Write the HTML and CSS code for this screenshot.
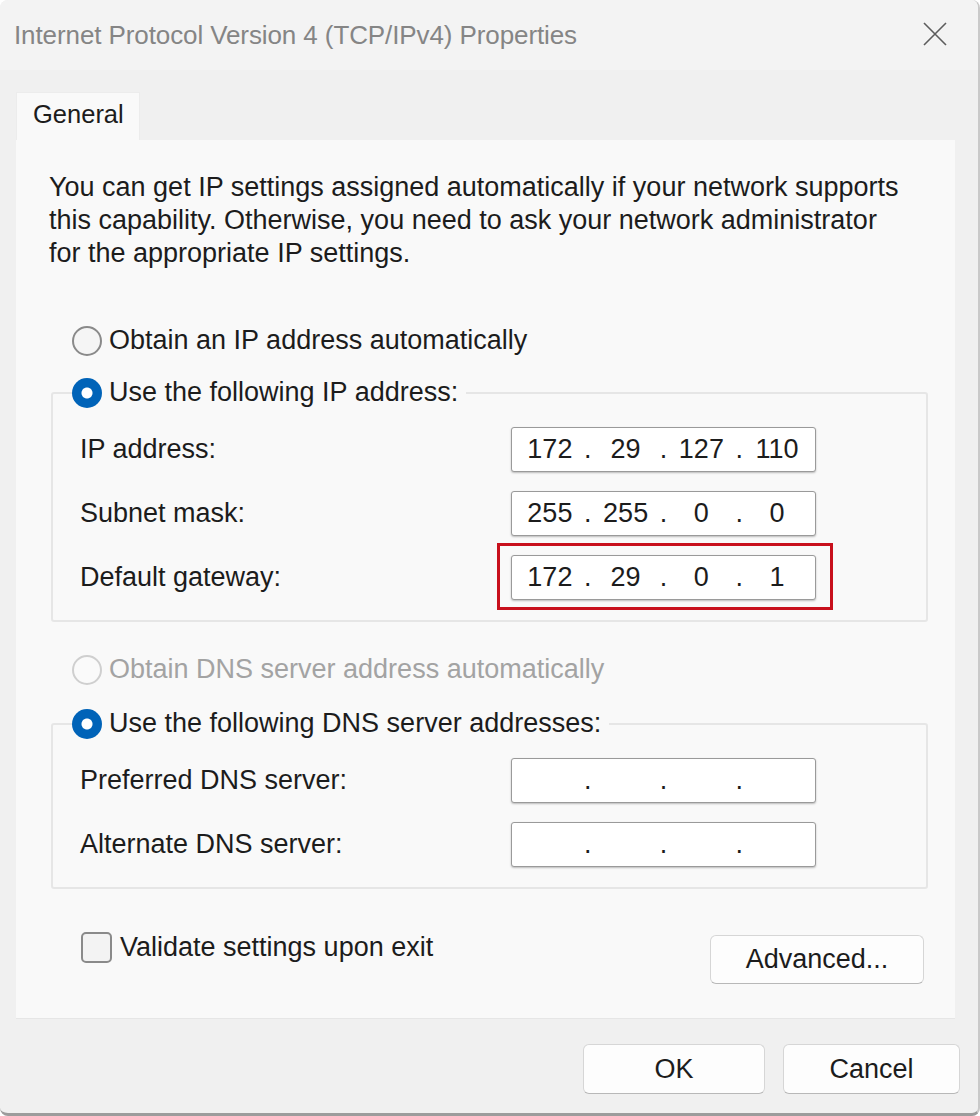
FILE: index.html
```html
<!DOCTYPE html>
<html lang="en">
<head>
    <meta charset="UTF-8">
    <meta name="viewport" content="width=device-width, initial-scale=1.0">
    <title>Internet Protocol Version 4 (TCP/IPv4) Properties</title>
    <link rel="stylesheet" href="styles.css">
</head>
<body>
    <div class="window">
        <div class="titlebar">
            <span class="title">Internet Protocol Version 4 (TCP/IPv4) Properties</span>
            <svg class="close" width="26" height="26" viewBox="0 0 26 26">
                <path d="M2 2 L24 24 M24 2 L2 24" stroke="#5c5c5c" stroke-width="1.6" fill="none"/>
            </svg>
        </div>
        <div class="tabs">
            <div class="tab">General</div>
        </div>
        <div class="page">
            <p class="intro">You can get IP settings assigned automatically if your network supports<br>this capability. Otherwise, you need to ask your network administrator<br>for the appropriate IP settings.</p>

            <div class="option">
                <span class="radio"></span>
                <span>Obtain an IP address automatically</span>
            </div>

            <fieldset class="group">
                <legend class="option">
                    <span class="radio checked"></span>
                    <span>Use the following IP address:</span>
                </legend>
                <div class="fields">
                    <label>IP address:</label>
                    <div class="ip">
                        <span class="seg">172</span><span class="dot">.</span><span class="seg">29</span><span class="dot">.</span><span class="seg">127</span><span class="dot">.</span><span class="seg">110</span>
                    </div>
                    <label>Subnet mask:</label>
                    <div class="ip">
                        <span class="seg">255</span><span class="dot">.</span><span class="seg">255</span><span class="dot">.</span><span class="seg">0</span><span class="dot">.</span><span class="seg">0</span>
                    </div>
                    <label>Default gateway:</label>
                    <div class="marked">
                        <div class="ip">
                            <span class="seg">172</span><span class="dot">.</span><span class="seg">29</span><span class="dot">.</span><span class="seg">0</span><span class="dot">.</span><span class="seg">1</span>
                        </div>
                    </div>
                </div>
            </fieldset>

            <div class="option disabled dns-auto">
                <span class="radio"></span>
                <span>Obtain DNS server address automatically</span>
            </div>

            <fieldset class="group dns">
                <legend class="option">
                    <span class="radio checked"></span>
                    <span>Use the following DNS server addresses:</span>
                </legend>
                <div class="fields">
                    <label>Preferred DNS server:</label>
                    <div class="ip">
                        <span class="seg"></span><span class="dot">.</span><span class="seg"></span><span class="dot">.</span><span class="seg"></span><span class="dot">.</span><span class="seg"></span>
                    </div>
                    <label>Alternate DNS server:</label>
                    <div class="ip">
                        <span class="seg"></span><span class="dot">.</span><span class="seg"></span><span class="dot">.</span><span class="seg"></span><span class="dot">.</span><span class="seg"></span>
                    </div>
                </div>
            </fieldset>

            <div class="bottom">
                <div class="check-row">
                    <span class="checkbox"></span>
                    <span>Validate settings upon exit</span>
                </div>
                <button class="btn advanced">Advanced...</button>
            </div>
        </div>
        <div class="footer">
            <button class="btn ok">OK</button>
            <button class="btn cancel">Cancel</button>
        </div>
    </div>
</body>
</html>
```

FILE: styles.css
```css
html, body {
    margin: 0;
    padding: 0;
    background: #ffffff;
}
body {
    font-family: "Liberation Sans", Arial, sans-serif;
    font-size: 27px;
    color: #1c1c1c;
}
.window {
    width: 980px;
    height: 1116px;
    box-sizing: border-box;
    background: #f0f0f0;
    border-right: 2px solid #c9c9c9;
    border-bottom: 3px solid #9c9c9c;
    border-radius: 8px;
    overflow: hidden;
}
.titlebar {
    height: 70px;
    display: flex;
    align-items: center;
    justify-content: space-between;
    padding: 0 30px 0 14px;
    background: #f3f3f3;
}
.title {
    font-size: 26px;
    color: #858585;
    letter-spacing: -0.1px;
}
.close {
    margin-top: -2px;
}
.tabs {
    padding: 22px 0 0 16px;
    display: flex;
}
.tab {
    width: 124px;
    height: 48px;
    box-sizing: border-box;
    padding: 7px 0 0 16px;
    font-size: 25.5px;
    background: #f9f9f9;
    border: 1px solid #ececec;
    border-bottom: none;
}
.page {
    margin: 0 23px 0 16px;
    height: 879px;
    box-sizing: border-box;
    padding: 31px 27px 0 33px;
    background: #f9f9f9;
    border-bottom: 1px solid #e6e6e6;
}
.intro {
    margin: 0;
    line-height: 33px;
    white-space: nowrap;
}
.option {
    display: flex;
    align-items: center;
    gap: 7px;
    height: 33px;
    margin-left: 23px;
}
.page > .option:first-of-type {
    margin-top: 54px;
}
.radio {
    width: 30px;
    height: 30px;
    box-sizing: border-box;
    border-radius: 50%;
    border: 2px solid #8a8a8a;
    background: #f5f5f5;
    flex: none;
}
.radio.checked {
    border: none;
    background: radial-gradient(circle, #ffffff 0 5px, #0063b8 6px);
}
.disabled {
    color: #a3a3a3;
}
.disabled .radio {
    border-color: #cfcfcf;
    background: #fafafa;
}
.group {
    margin: 19px 0 0 2px;
    padding: 0;
    border: 2px solid #e6e6e6;
    border-radius: 3px;
}
.group legend.option {
    margin-left: 19px;
    padding: 0 8px 0 0;
}
.fields {
    display: grid;
    grid-template-columns: 431px 305px;
    row-gap: 19px;
    align-items: center;
    padding: 18px 0 20px 27px;
}
.dns .fields {
    padding-bottom: 20px;
}
.ip {
    height: 45px;
    box-sizing: border-box;
    display: flex;
    align-items: center;
    background: #ffffff;
    border: 1px solid #9a9a9a;
    border-radius: 3px;
    box-shadow: 0 1px 2px rgba(0, 0, 0, 0.25);
}
.seg {
    flex: 1;
    text-align: center;
}
.dot {
    width: 0;
    display: flex;
    justify-content: center;
}
.marked {
    margin: -12px -17px -10px -14px;
    padding: 9px 14px 7px 11px;
    border: 3px solid #c8101c;
}
.dns-auto {
    margin-top: 31px;
}
.dns {
    margin-top: 21px;
}
.bottom {
    display: flex;
    justify-content: space-between;
    align-items: flex-start;
}
.check-row {
    display: flex;
    align-items: center;
    gap: 8px;
    margin: 43px 0 0 32px;
}
.checkbox {
    width: 31px;
    height: 31px;
    box-sizing: border-box;
    border: 2px solid #8a8a8a;
    border-radius: 5px;
    background: #f3f3f3;
}
.btn {
    font-family: "Liberation Sans", Arial, sans-serif;
    font-size: 27px;
    color: #1c1c1c;
    background: #fdfdfd;
    border: 1px solid #d6d6d6;
    border-bottom-color: #b8b8b8;
    border-radius: 6px;
    padding: 0;
}
.advanced {
    width: 214px;
    height: 49px;
    margin: 46px 4px 0 0;
}
.footer {
    display: flex;
    justify-content: flex-end;
    gap: 18px;
    padding: 25px 18px 0 0;
}
.ok {
    width: 182px;
    height: 50px;
}
.cancel {
    width: 177px;
    height: 50px;
}
```
